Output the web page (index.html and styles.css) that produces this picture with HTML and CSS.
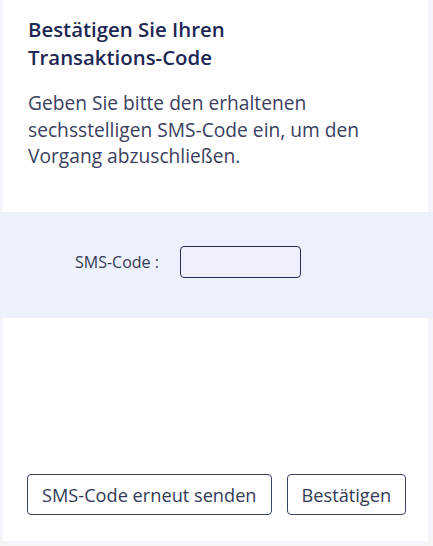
FILE: index.html
```html
<!DOCTYPE html>
<html lang="de">
<head>
    <meta charset="UTF-8">
    <meta name="viewport" content="width=device-width, initial-scale=1.0">
    <title>Transaktions-Code</title>
    <link rel="stylesheet" href="styles.css">
</head>
<body>
    <div class="card card-top">
        <h1 class="title">Bestätigen Sie Ihren<br>Transaktions-Code</h1>
        <p class="intro">Geben Sie bitte den erhaltenen sechsstelligen SMS-Code ein, um den Vorgang abzuschließen.</p>
    </div>
    <div class="code-band">
        <label class="code-label" for="smsCode">SMS-Code :</label>
        <input class="code-input" id="smsCode" type="text" maxlength="6">
    </div>
    <div class="card card-bottom">
        <div class="button-row">
            <button class="button">SMS-Code erneut senden</button>
            <button class="button">Bestätigen</button>
        </div>
    </div>
</body>
</html>
```

FILE: styles.css
```css
body {
    font-family: 'Open Sans', 'Noto Sans', sans-serif;
    background-color: #f4f5f8;
    color: #2e3456;
    margin: 0;
    padding: 0;
}
.card {
    background-color: #fff;
    margin: 0 5px 0 3px;
}
.card-top {
    padding: 15px 25px 0 25px;
    height: 197px;
}
.title {
    font-size: 20.4px;
    font-weight: 600;
    line-height: 28px;
    color: #1d2754;
    margin: 0 0 19px 0;
}
.intro {
    font-size: 19.2px;
    line-height: 26.5px;
    color: #3a405e;
    margin: 0;
}
.code-band {
    background-color: #edf1fb;
    height: 99px;
    padding: 0 0 7px 75px;
    display: flex;
    align-items: center;
}
.code-label {
    font-size: 16px;
    color: #333a57;
    width: 105px;
}
.code-input {
    width: 121px;
    height: 32px;
    box-sizing: border-box;
    border: 1.5px solid #262d52;
    border-radius: 4px;
    background-color: #eef1fb;
    padding: 0 6px;
}
.card-bottom {
    height: 223px;
    display: flex;
    align-items: flex-end;
}
.button-row {
    display: flex;
    gap: 15px;
    padding: 0 0 26px 24px;
}
.button {
    font-family: 'Open Sans', 'Noto Sans', sans-serif;
    font-size: 18.2px;
    color: #333a57;
    background-color: #fff;
    border: 1px solid #3a4166;
    border-radius: 4px;
    height: 41px;
    padding: 0 14px;
}
```
